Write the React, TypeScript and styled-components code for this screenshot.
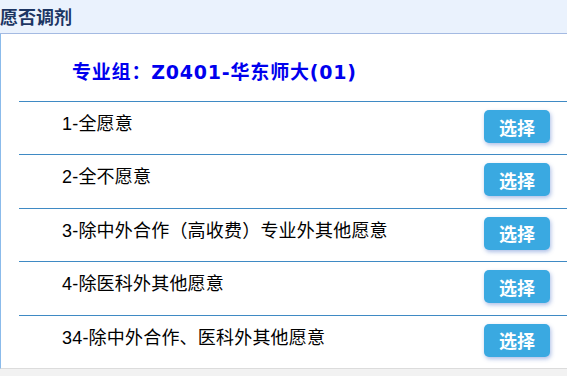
import React from "react";
import styled, { createGlobalStyle } from "styled-components";

const Global = createGlobalStyle`
  html, body { margin: 0; padding: 0; background: #f2f2f2; }
  body { font-family: "Liberation Sans", "Noto Sans CJK SC", sans-serif; overflow: hidden; }
  * { box-sizing: border-box; }
`;

const Page = styled.div`
  width: 567px;
  height: 376px;
  overflow: hidden;
`;

const Header = styled.div`
  height: 34px;
  background: #eaf2fd;
  border-bottom: 1px solid #a4bae2;
  display: flex;
  align-items: center;
`;

const HeaderTitle = styled.h1`
  margin: 0;
  font-size: 18px;
  font-weight: bold;
  color: #1c3563;
  line-height: 33px;
  font-family: "Noto Sans CJK SC", sans-serif;
`;

const Panel = styled.div`
  background: #fff;
  border-left: 1px solid #8bbbeb;
  border-bottom: 1px solid #dcdcdc;
`;

const GroupTitle = styled.div`
  height: 67px;
  padding: 6px 0 0 71px;
  display: flex;
  align-items: center;
  font-size: 19px;
  letter-spacing: 0.8px;
  font-weight: bold;
  color: #0000ee;
  font-family: "DejaVu Sans", "Noto Sans CJK SC", sans-serif;
`;

const List = styled.div`
  margin-left: 18px;
`;

const Row = styled.div`
  height: 53.4px;
  border-top: 1px solid #3f8ac4;
  display: flex;
  align-items: flex-start;
  justify-content: space-between;
  padding: 0 17px 0 43px;
`;

const Label = styled.span`
  margin-top: 10px;
  font-size: 18px;
  line-height: 24px;
  letter-spacing: 0.2px;
  color: #000;
  font-family: "Liberation Sans", "Noto Sans CJK SC", sans-serif;
`;

const SelectButton = styled.button`
  margin-top: 8px;
  width: 66px;
  height: 33px;
  border: none;
  border-radius: 5px;
  background: #3aa9e1;
  color: #fff;
  font-size: 18px;
  font-weight: bold;
  font-family: "Noto Sans CJK SC", sans-serif;
  box-shadow: 1px 2px 4px rgba(70, 110, 200, 0.45);
  cursor: pointer;
  padding: 0;
`;

const options = [
  "1-全愿意",
  "2-全不愿意",
  "3-除中外合作（高收费）专业外其他愿意",
  "4-除医科外其他愿意",
  "34-除中外合作、医科外其他愿意",
];

export default function App() {
  return (
    <Page>
      <Global />
      <Header>
        <HeaderTitle>愿否调剂</HeaderTitle>
      </Header>
      <Panel>
        <GroupTitle>专业组：Z0401-华东师大(01)</GroupTitle>
        <List>
          {options.map((o) => (
            <Row key={o}>
              <Label>{o}</Label>
              <SelectButton>选择</SelectButton>
            </Row>
          ))}
        </List>
      </Panel>
    </Page>
  );
}
